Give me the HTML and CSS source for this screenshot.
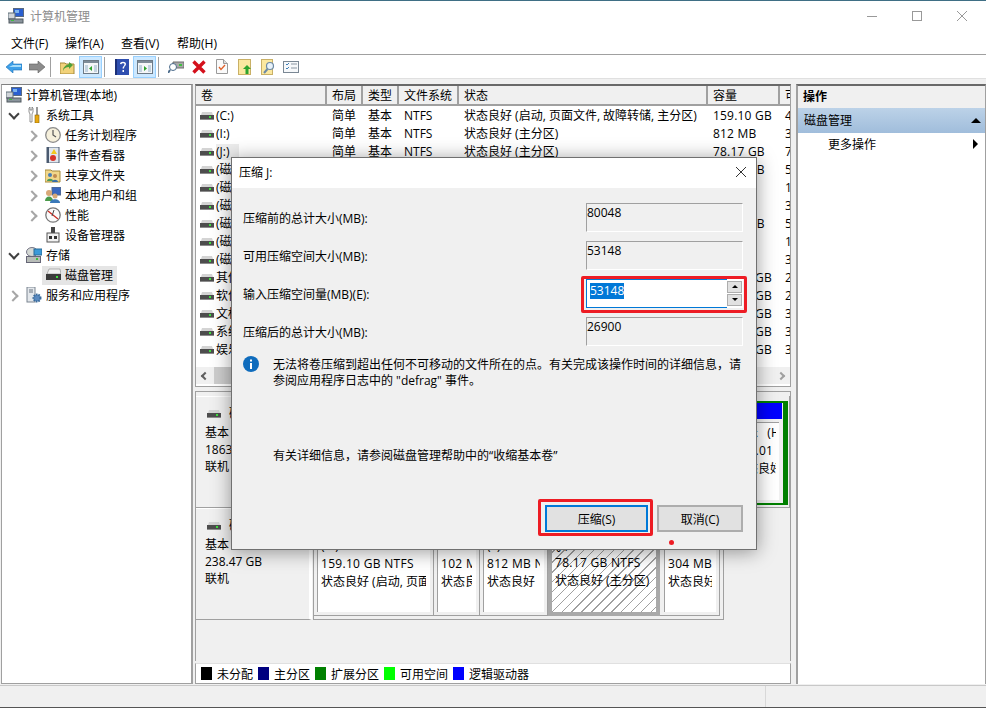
FILE: index.html
```html
<!DOCTYPE html>
<html lang="zh-CN">
<head>
    <meta charset="UTF-8">
    <title>计算机管理</title>
    <link rel="stylesheet" href="styles.css">
</head>
<body>
    <!-- icons used more than once -->
    <svg class="defs">
        <symbol id="drive" viewBox="0 0 14 8">
            <path d="M1 3 2 0h10l1 3z" fill="#d4d4d4"/>
            <rect x="0" y="3" width="14" height="5" fill="#4d4d4d"/>
            <rect x="0" y="7" width="14" height="1" fill="#8c8c8c"/>
            <rect x="9" y="4" width="2" height="2" fill="#3fe03f"/>
        </symbol>
        <symbol id="computer" viewBox="0 0 16 16">
            <rect x="5" y="0" width="11" height="9" fill="#5a6a80"/>
            <rect x="6" y="1" width="9" height="7" fill="#2a5fd0"/>
            <rect x="7" y="2" width="4" height="3" fill="#7db4ee"/>
            <rect x="0" y="5" width="7" height="6" fill="#d0d4d8" stroke="#60707a"/>
            <rect x="1" y="11" width="14" height="4" fill="#8a949c" stroke="#505a60"/>
            <rect x="3" y="12" width="3" height="1" fill="#3fbf3f"/>
        </symbol>
        <symbol id="panel" viewBox="0 0 16 14">
            <rect x=".5" y=".5" width="15" height="13" fill="#f4f6f8" stroke="#6d7a86"/>
            <rect x="1" y="1" width="14" height="2" fill="#7e8c98"/>
            <rect x="2" y="5" width="3" height="7" fill="#c3d3e0"/>
            <rect x="11" y="5" width="3" height="7" fill="#c3d3e0"/>
        </symbol>
    </svg>

    <div class="window">
        <div class="titlebar">
            <svg class="title-icon"><use href="#computer"/></svg>
            <span class="title-text">计算机管理</span>
            <div class="win-btns">
                <svg width="10" height="10" viewBox="0 0 10 10"><path d="M0 5.5h10" stroke="#999"/></svg>
                <svg width="10" height="10" viewBox="0 0 10 10"><rect x=".5" y=".5" width="9" height="9" fill="none" stroke="#999"/></svg>
                <svg width="10" height="10" viewBox="0 0 10 10"><path d="M0 0l10 10M10 0 0 10" stroke="#999"/></svg>
            </div>
        </div>

        <div class="menubar">
            <span>文件(F)</span>
            <span>操作(A)</span>
            <span>查看(V)</span>
            <span>帮助(H)</span>
        </div>

        <div class="toolbar">
            <div class="tool"><svg width="16" height="12" viewBox="0 0 16 12"><path d="M7 0v3h9v6H7v3L0 6z" fill="#3d9fe8" stroke="#1b6fb5" stroke-width=".6"/><path d="M7 4h8v2H3z" fill="#a5dcfa"/></svg></div>
            <div class="tool"><svg width="16" height="12" viewBox="0 0 16 12"><path d="M9 0v3H0v6h9v3l7-6z" fill="#8c8c8c" stroke="#606060" stroke-width=".6"/></svg></div>
            <div class="tool-sep"></div>
            <div class="tool"><svg width="15" height="15" viewBox="0 0 15 15"><path d="M0 4h5l1 1h8v10H0z" fill="#f2d27a" stroke="#a68a3a"/><path d="M3 12c0-4 3-6 6-7V3l4 3-4 4V8c-3 0-5 1-6 4z" fill="#4ea03a"/></svg></div>
            <div class="tool on"><svg width="16" height="14"><use href="#panel"/><path d="M9 6v5L6 8.500z" fill="#2da32d"/></svg></div>
            <div class="tool-sep"></div>
            <div class="tool"><svg width="14" height="16" viewBox="0 0 14 16"><rect width="14" height="16" fill="#2f4fb0"/><rect width="2" height="16" fill="#1b2f78"/><path d="M5 5c0-3 6-3 6 0 0 2-2 2-2 4.500H7.500C7.500 7 9.500 7 9.500 5.200c0-1.400-3-1.400-3 0z" fill="#fff"/><rect x="7.500" y="11" width="1.500" height="2" fill="#fff"/></svg></div>
            <div class="tool on"><svg width="16" height="14"><use href="#panel"/><path d="M7 6v5l3-2.500z" fill="#2da32d"/></svg></div>
            <div class="tool-sep"></div>
            <div class="tool"><svg width="16" height="13" viewBox="0 0 16 13"><path d="M5 2h11v6H5z" fill="#a8a8a8" stroke="#6d6d6d"/><rect x="11" y="4" width="3" height="2" fill="#3fbf3f"/><circle cx="5" cy="7" r="3.500" fill="#fff" stroke="#4a6a8a"/><path d="M2 10l-2 3" stroke="#4a6a8a" stroke-width="2"/></svg></div>
            <div class="tool"><svg width="14" height="14" viewBox="0 0 14 14"><path d="M1.500 1.500l11 11M12.500 1.500l-11 11" stroke="#d4101c" stroke-width="3.400"/></svg></div>
            <div class="tool"><svg width="12" height="15" viewBox="0 0 12 15"><path d="M.5.500h7l4 4v10H.5z" fill="#fafafa" stroke="#9a9a9a"/><path d="M7.500.500v4h4" fill="#ddd" stroke="#9a9a9a"/><path d="M3 8l2 2.500L9 6" fill="none" stroke="#e0602a" stroke-width="1.300"/></svg></div>
            <div class="tool"><svg width="13" height="16" viewBox="0 0 13 16"><rect x=".5" y=".5" width="12" height="15" fill="#fbe8a0" stroke="#c9b066"/><path d="M9 6l4 4h-2.500v5h-3v-5H5z" fill="#2ea32e"/></svg></div>
            <div class="tool"><svg width="14" height="16" viewBox="0 0 14 16"><rect x=".5" y=".5" width="11" height="15" fill="#fbe8a0" stroke="#c9b066"/><circle cx="9" cy="7" r="3.500" fill="#e8f2fa" stroke="#6d8aa5" stroke-width="1.200"/><path d="M6.500 10 3 14" stroke="#6d8aa5" stroke-width="2"/></svg></div>
            <div class="tool"><svg width="16" height="12" viewBox="0 0 16 12"><rect x=".5" y=".5" width="15" height="11" fill="#f6f8fa" stroke="#7a8794"/><path d="M3 3l1 1 2-2M3 7l1 1 2-2" fill="none" stroke="#3f7fb8"/><path d="M8 3h6M8 7h6" stroke="#8a96a2"/></svg></div>
        </div>

        <div class="workspace">
            <div class="tree">
                <div class="tree-row">
                    <svg class="ic"><use href="#computer"/></svg>计算机管理(本地)
                </div>
                <div class="tree-row lv1">
                    <span class="exp open"></span>
                    <svg class="ic" viewBox="0 0 16 16"><path d="M3 1v4l1 2v8h2V7l1-2V1L6 0v3H4V0z" fill="#fff" stroke="#777" stroke-width=".8"/><rect x="10" y="0" width="2" height="8" fill="#9a9a9a"/><rect x="9" y="8" width="4" height="8" fill="#e8a810" stroke="#8a6408" stroke-width=".6"/></svg>系统工具
                </div>
                <div class="tree-row lv2">
                    <span class="exp"></span>
                    <svg class="ic" viewBox="0 0 16 16"><circle cx="8" cy="8" r="7.300" fill="#f6f0dc" stroke="#8a8a8a" stroke-width="1.300"/><path d="M8 3v5l3 2" fill="none" stroke="#555" stroke-width="1.200"/></svg>任务计划程序
                </div>
                <div class="tree-row lv2">
                    <span class="exp"></span>
                    <svg class="ic" viewBox="0 0 16 16"><rect x="2" y="0" width="12" height="16" fill="#dfe6ee" stroke="#4a5a70"/><rect x="2" y="0" width="2" height="16" fill="#4a5a70"/><path d="M9 2l3 5H6z" fill="#f2c81e"/><circle cx="8" cy="11" r="3" fill="#d8352a"/></svg>事件查看器
                </div>
                <div class="tree-row lv2">
                    <span class="exp"></span>
                    <svg class="ic" viewBox="0 0 16 16"><path d="M0 3h6l1 1h8v11H0z" fill="#f2d78a" stroke="#a68a3a"/><circle cx="5" cy="8" r="2" fill="#4a7fb8"/><path d="M2 14c0-3 6-3 6 0z" fill="#4a9a5a"/><circle cx="10" cy="9" r="2" fill="#c08a50"/><path d="M7 15c0-3 6-3 6 0z" fill="#3a6fa8"/></svg>共享文件夹
                </div>
                <div class="tree-row lv2">
                    <span class="exp"></span>
                    <svg class="ic" viewBox="0 0 16 16"><rect x="7" y="0" width="9" height="8" fill="#3a68c0" stroke="#5a6a80"/><circle cx="4" cy="6" r="3" fill="#d8a878"/><path d="M0 14c0-6 8-6 8 0z" fill="#4a9a4a"/><circle cx="10" cy="9" r="2.500" fill="#d8a878"/><path d="M5 16c0-5 10-5 10 0z" fill="#3a78b8"/></svg>本地用户和组
                </div>
                <div class="tree-row lv2">
                    <span class="exp"></span>
                    <svg class="ic" viewBox="0 0 16 16"><circle cx="8" cy="8" r="7.200" fill="#fafafa" stroke="#777" stroke-width="1.300"/><path d="M3 4l10 8" stroke="#c8281e" stroke-width="1.300"/><path d="M9 3 7 9" stroke="#444"/></svg>性能
                </div>
                <div class="tree-row lv2">
                    <span class="exp none"></span>
                    <svg class="ic" viewBox="0 0 16 16"><rect x="6" y="0" width="4" height="6" fill="#444"/><rect x="2" y="6" width="12" height="9" fill="#f2f2f2" stroke="#555"/><rect x="4" y="9" width="3" height="3" fill="#333"/><rect x="9" y="9" width="3" height="3" fill="#333"/></svg>设备管理器
                </div>
                <div class="tree-row lv1">
                    <span class="exp open"></span>
                    <svg class="ic" viewBox="0 0 16 16"><ellipse cx="6" cy="5" rx="5.500" ry="4.500" fill="#d4d8d4" stroke="#778"/><rect x="8" y="2" width="8" height="6" fill="#3a9ad8" stroke="#2a6a98"/><rect x=".5" y="9.500" width="14" height="6" fill="#b8bcb8" stroke="#667"/><rect x="10" y="11" width="2" height="2" fill="#3fbf3f"/></svg>存储
                </div>
                <div class="tree-row lv2">
                    <span class="exp none"></span>
                    <span class="sel"><svg class="ic" viewBox="0 0 16 16"><path d="M2 7 4 2h11l1 5z" fill="#f2f2f2" stroke="#888" stroke-width=".6"/><rect x="1" y="7" width="15" height="6" fill="#3a3a3a"/><rect x="11" y="9" width="2" height="2" fill="#3fe03f"/></svg>磁盘管理</span>
                </div>
                <div class="tree-row lv1">
                    <span class="exp"></span>
                    <svg class="ic" viewBox="0 0 16 16"><rect x="1" y="0" width="8" height="15" fill="#e4e8ec" stroke="#7a8490"/><path d="M3 3h4M3 5h4" stroke="#6a7480"/><circle cx="11" cy="11" r="3.500" fill="#5a8ac0" stroke="#3a6a9a" stroke-width="2" stroke-dasharray="1.500 1"/></svg>服务和应用程序
                </div>
            </div>

            <div class="center">
                <div class="volumes">
                    <table class="vol-table">
                        <colgroup>
                            <col class="c-name"><col class="c-layout"><col class="c-type"><col class="c-fs"><col class="c-status"><col class="c-size"><col>
                        </colgroup>
                        <thead>
                            <tr><th>卷</th><th>布局</th><th>类型</th><th>文件系统</th><th>状态</th><th>容量</th><th>可</th></tr>
                        </thead>
                        <tbody>
                            <tr><td><svg class="drv"><use href="#drive"/></svg>(C:)</td><td>简单</td><td>基本</td><td>NTFS</td><td>状态良好 (启动, 页面文件, 故障转储, 主分区)</td><td>159.10 GB</td><td>4</td></tr>
                            <tr><td><svg class="drv"><use href="#drive"/></svg>(I:)</td><td>简单</td><td>基本</td><td>NTFS</td><td>状态良好 (主分区)</td><td>812 MB</td><td>3</td></tr>
                            <tr><td><svg class="drv"><use href="#drive"/></svg><span class="cur">(J:)</span></td><td>简单</td><td>基本</td><td>NTFS</td><td>状态良好 (主分区)</td><td>78.17 GB</td><td>7</td></tr>
                            <tr><td><svg class="drv"><use href="#drive"/></svg>(磁</td><td></td><td></td><td></td><td></td><td>78.17 GB</td><td>5</td></tr>
                            <tr><td><svg class="drv"><use href="#drive"/></svg>(磁</td><td></td><td></td><td></td><td></td><td>812 MB</td><td>1</td></tr>
                            <tr><td><svg class="drv"><use href="#drive"/></svg>(磁</td><td></td><td></td><td></td><td></td><td>812 MB</td><td>3</td></tr>
                            <tr><td><svg class="drv"><use href="#drive"/></svg>(磁</td><td></td><td></td><td></td><td></td><td>78.17 GB</td><td>5</td></tr>
                            <tr><td><svg class="drv"><use href="#drive"/></svg>(磁</td><td></td><td></td><td></td><td></td><td>812 MB</td><td>1</td></tr>
                            <tr><td><svg class="drv"><use href="#drive"/></svg>(磁</td><td></td><td></td><td></td><td></td><td>812 MB</td><td>3</td></tr>
                            <tr><td><svg class="drv"><use href="#drive"/></svg>其他</td><td></td><td></td><td></td><td></td><td>186.26 GB</td><td>2</td></tr>
                            <tr><td><svg class="drv"><use href="#drive"/></svg>软件</td><td></td><td></td><td></td><td></td><td>186.26 GB</td><td>2</td></tr>
                            <tr><td><svg class="drv"><use href="#drive"/></svg>文档</td><td></td><td></td><td></td><td></td><td>465.76 GB</td><td>3</td></tr>
                            <tr><td><svg class="drv"><use href="#drive"/></svg>系统</td><td></td><td></td><td></td><td></td><td>465.76 GB</td><td>3</td></tr>
                            <tr><td><svg class="drv"><use href="#drive"/></svg>娱乐</td><td></td><td></td><td></td><td></td><td>558.01 GB</td><td>3</td></tr>
                        </tbody>
                    </table>
                    <div class="hscroll">
                        <span class="arrow-l"></span>
                        <div class="thumb"></div>
                        <span class="arrow-r"></span>
                    </div>
                </div>

                <div class="disks">
                    <div class="disk">
                        <div class="disk-label">
                            <div class="disk-name"><svg class="drv"><use href="#drive"/></svg>磁盘 1</div>
                            <div>基本</div>
                            <div>1863.01 GB</div>
                            <div>联机</div>
                        </div>
                        <div class="parts">
                            <div class="logical">
                                <div class="part last-logical">
                                    <div class="bar blue"></div>
                                    <div class="part-body">
                                        <div class="pre">娱乐   (H:)</div>
                                        <div>558.01 GB NTFS</div>
                                        <div>状态良好 (逻辑驱动器)</div>
                                    </div>
                                </div>
                            </div>
                        </div>
                    </div>
                    <div class="disk">
                        <div class="disk-label">
                            <div class="disk-name"><svg class="drv"><use href="#drive"/></svg>磁盘 0</div>
                            <div>基本</div>
                            <div>238.47 GB</div>
                            <div>联机</div>
                        </div>
                        <div class="parts">
                            <div class="part w-c">
                                <div class="bar"></div>
                                <div class="part-body">
                                    <div>(C:)</div>
                                    <div>159.10 GB NTFS</div>
                                    <div>状态良好 (启动, 页面</div>
                                </div>
                            </div>
                            <div class="part w-r">
                                <div class="bar"></div>
                                <div class="part-body">
                                    <div></div>
                                    <div>102 MB</div>
                                    <div>状态良好</div>
                                </div>
                            </div>
                            <div class="part w-i">
                                <div class="bar"></div>
                                <div class="part-body">
                                    <div>(I:)</div>
                                    <div>812 MB N</div>
                                    <div>状态良好</div>
                                </div>
                            </div>
                            <div class="part w-j picked">
                                <div class="bar"></div>
                                <div class="part-body">
                                    <div>(J:)</div>
                                    <div>78.17 GB NTFS</div>
                                    <div>状态良好 (主分区)</div>
                                </div>
                            </div>
                            <div class="part w-e">
                                <div class="bar"></div>
                                <div class="part-body">
                                    <div></div>
                                    <div>304 MB</div>
                                    <div>状态良好</div>
                                </div>
                            </div>
                        </div>
                    </div>
                </div>

                <div class="legend">
                    <i class="k-black"></i><span>未分配</span>
                    <i class="k-navy"></i><span>主分区</span>
                    <i class="k-green"></i><span>扩展分区</span>
                    <i class="k-lime"></i><span>可用空间</span>
                    <i class="k-blue"></i><span>逻辑驱动器</span>
                </div>
            </div>

            <div class="actions">
                <div class="act-head">操作</div>
                <div class="act-group">磁盘管理<span class="tri-up"></span></div>
                <div class="act-item">更多操作<span class="tri-right"></span></div>
            </div>
        </div>

        <div class="statusbar"><div class="status-cell"></div></div>

        <!-- shrink dialog -->
        <div class="dialog">
            <div class="dlg-title">
                <span>压缩 J:</span>
                <svg width="10" height="10" viewBox="0 0 10 10"><path d="M0 0l10 10M10 0 0 10" stroke="#333"/></svg>
            </div>
            <div class="dlg-body">
                <div class="fields">
                    <label>压缩前的总计大小(MB):</label>
                    <div class="ro">80048</div>
                    <label>可用压缩空间大小(MB):</label>
                    <div class="ro">53148</div>
                    <label>输入压缩空间量(MB)(E):</label>
                    <div class="spin-field marked">
                        <div class="spin-input"><span class="picked-text">53148</span></div>
                        <div class="spin-btns">
                            <span class="spin-up"></span>
                            <span class="spin-down"></span>
                        </div>
                    </div>
                    <label>压缩后的总计大小(MB):</label>
                    <div class="ro">26900</div>
                </div>
                <div class="note">
                    <svg class="info" width="16" height="16" viewBox="0 0 16 16"><circle cx="8" cy="8" r="8" fill="#0f6cbd"/><rect x="7" y="7" width="2" height="6" fill="#fff"/><rect x="7" y="3.500" width="2" height="2" fill="#fff"/></svg>
                    <p>无法将卷压缩到超出任何不可移动的文件所在的点。有关完成该操作时间的详细信息，请参阅应用程序日志中的 "defrag" 事件。</p>
                </div>
                <p class="help">有关详细信息，请参阅磁盘管理帮助中的“收缩基本卷”</p>
                <div class="dlg-btns">
                    <button class="btn btn-main marked">压缩(S)</button>
                    <button class="btn btn-cancel">取消(C)</button>
                </div>
                <span class="red-dot"></span>
            </div>
        </div>
    </div>
</body>
</html>
```

FILE: styles.css
```css
* {
    box-sizing: border-box;
}

html, body {
    margin: 0;
    height: 100%;
    overflow: hidden;
}

body {
    font-family: "Open Sans", "Noto Sans CJK SC", sans-serif;
    font-size: 12px;
    color: #000;
    background-color: #f0f0f0;
}

.defs {
    display: none;
}

.window {
    position: relative;
    display: flex;
    flex-direction: column;
    width: 986px;
    height: 708px;
    border-top: 1px solid #3f6f85;
    border-bottom: 1px solid #555;
    overflow: hidden;
}

/* title + menu */

.titlebar {
    display: flex;
    align-items: center;
    height: 31px;
    padding: 0 0 2px 8px;
    background-color: #fff;
}

.title-icon {
    width: 16px;
    height: 16px;
}

.title-text {
    margin-left: 6px;
    color: #8c8c8c;
}

.win-btns {
    display: flex;
    gap: 35px;
    margin-left: auto;
    margin-right: 19px;
}

.menubar {
    display: flex;
    align-items: center;
    height: 23px;
    padding-left: 11px;
    gap: 16px;
    background-color: #fff;
    border-bottom: 1px solid #a0a0a0;
}

.menubar span {
    width: 40px;
}

.menubar span:first-child {
    width: 38px;
}

/* toolbar */

.toolbar {
    display: flex;
    align-items: center;
    height: 24px;
    padding-left: 2px;
    background-color: #fff;
    border-bottom: 1px solid #e0e0e0;
}

.tool {
    display: flex;
    align-items: center;
    justify-content: center;
    width: 23px;
    height: 22px;
}

.tool.on {
    background-color: #cce8ff;
    border: 1px solid #99d1ff;
}

.tool-sep {
    width: 1px;
    height: 20px;
    margin: 0 5px 0 2px;
    background-color: #a0a0a0;
}

/* panes */

.workspace {
    display: flex;
    flex: 1;
    min-height: 0;
    padding: 5px 0 1px 1px;
}

.tree {
    width: 192px;
    background-color: #fff;
    border: 1px solid #a0a0a0;
    border-top-color: #808080;
    border-right-width: 2px;
    white-space: nowrap;
}

.tree-row {
    display: flex;
    align-items: center;
    height: 20px;
    padding-left: 4px;
}

.tree-row.lv1 {
    padding-left: 5px;
}

.tree-row.lv2 {
    padding-left: 24px;
}

.ic {
    flex: none;
    width: 16px;
    height: 16px;
    margin-right: 4px;
}

.exp {
    position: relative;
    flex: none;
    width: 12px;
    height: 12px;
    margin-right: 7px;
}

.exp::before {
    content: "";
    position: absolute;
    left: 2px;
    top: 3px;
    width: 6px;
    height: 6px;
    border-top: 2px solid #a6a6a6;
    border-right: 2px solid #a6a6a6;
    transform: rotate(45deg);
}

.exp.open::before {
    left: 3px;
    top: 1px;
    border-color: #404040;
    transform: rotate(135deg);
}

.exp.none::before {
    display: none;
}

.sel {
    display: flex;
    align-items: center;
    height: 19px;
    margin-left: -3px;
    padding: 0 4px 0 3px;
    background-color: #e5e5e5;
}

.center {
    display: flex;
    flex-direction: column;
    width: 596px;
    margin-left: 2px;
}

.volumes {
    flex: none;
    height: 303px;
    background-color: #fff;
    border: 1px solid #a0a0a0;
    border-top: 2px solid #696969;
    overflow: hidden;
}

.vol-table {
    width: 640px;
    border-collapse: separate;
    border-spacing: 0;
    table-layout: fixed;
    white-space: nowrap;
}

.c-name { width: 131px; }
.c-layout { width: 36px; }
.c-type { width: 36px; }
.c-fs { width: 60px; }
.c-status { width: 249px; }
.c-size { width: 72px; }

.vol-table th {
    height: 20px;
    padding: 2px 0 0 5px;
    line-height: 16px;
    font-weight: normal;
    text-align: left;
    background-color: #f0f0f0;
    border-right: 2px solid #a0a0a0;
    border-bottom: 2px solid #a0a0a0;
    overflow: hidden;
}

.vol-table td {
    height: 18px;
    padding: 1px 0 0 5px;
    line-height: 16px;
    overflow: hidden;
}

.vol-table td:first-child {
    padding-left: 4px;
}

.vol-table td:nth-child(6) {
    letter-spacing: .2px;
}

.drv {
    width: 14px;
    height: 8px;
    margin-right: 2px;
}

.cur {
    display: inline-block;
    padding-right: 10px;
    background-color: #ececec;
}

.hscroll {
    display: flex;
    align-items: center;
    height: 17px;
    margin-top: 9px;
    background-color: #f0f0f0;
}

.arrow-l, .arrow-r {
    flex: none;
    width: 6px;
    height: 6px;
    margin: 0 6px;
    border-top: 2px solid #606060;
    border-left: 2px solid #606060;
    transform: rotate(-45deg);
}

.arrow-r {
    margin-left: auto;
    border-color: #a0a0a0;
    transform: rotate(135deg);
}

.thumb {
    width: 480px;
    height: 17px;
    background-color: #cdcdcd;
}

/* graphical disk view */

.disks {
    flex: none;
    height: 270px;
    margin-top: 4px;
    padding-top: 4px;
    border-top: 1px solid #a0a0a0;
    border-left: 1px solid #a0a0a0;
    border-right: 1px solid #a0a0a0;
}

.disk {
    display: flex;
    height: 112px;
}

.disk-label {
    position: relative;
    flex: none;
    width: 116px;
    padding: 27px 0 0 9px;
    line-height: 17px;
    border-top: 1px solid #fff;
    border-bottom: 1px solid #a0a0a0;
    border-right: 3px solid #fff;
}

.disk-name {
    position: absolute;
    top: 8px;
    left: 11px;
}

.disk-name .drv {
    margin-right: 8px;
}

.parts {
    display: flex;
    flex: none;
    width: 411px;
    margin-left: 1px;
    padding: 0 3px 3px 0;
    border: 1px solid #a0a0a0;
    border-top: 0;
}

.disk:first-child .parts {
    flex: 1;
    justify-content: flex-end;
    padding: 5px 1px 2px 0;
    border-left: 0;
}

.logical {
    display: flex;
    justify-content: flex-end;
    width: 300px;
    padding: 0 1px 3px 0;
    border: 5px solid #008000;
    border-width: 2px 5px;
    background-color: #f0f0f0;
}

.part {
    display: flex;
    flex-direction: column;
    height: 100%;
    min-width: 0;
    padding: 6px 3px 3px 3px;
    border-right: 1px solid #a0a0a0;
    border-bottom: 1px solid #a0a0a0;
    background-color: #f0f0f0;
}

.bar {
    flex: none;
    height: 16px;
    margin: 0 -3px 2px -3px;
    background-color: #000080;
}

.bar.blue {
    margin: 0 0 3px 0;
    background-color: #0000ff;
}

.part-body {
    flex: 1;
    padding: 4px 4px 0 3px;
    line-height: 18px;
    background-color: #fff;
    border-left: 1px solid #a0a0a0;
    border-top: 1px solid #a0a0a0;
    white-space: nowrap;
    overflow: hidden;
}

.part-body div {
    height: 18px;
    overflow: hidden;
}

.part-body div:nth-child(2) {
    letter-spacing: .3px;
}

.pre {
    white-space: pre;
}

.last-logical {
    width: 52px;
    padding: 0;
    border: 0;
}

.last-logical .part-body {
    margin-right: 3px;
    padding: 1px 3px 0 3px;
}

.w-c { width: 120px; }
.w-r { width: 46px; }
.w-i { width: 68px; }
.w-j { width: 112px; }
.w-e { width: 60px; padding-left: 4px; }

.picked {
    padding: 6px 4px 4px 4px;
    background-color: #a9a9a9;
    border: 0;
}

.picked .bar {
    margin: 0 0 2px 0;
}

.picked .part-body {
    border: 0;
    background: repeating-linear-gradient(135deg, #a0a0a0 0, #a0a0a0 1px, #fff 1px, #fff 7px);
}

.legend {
    display: flex;
    flex: none;
    align-items: center;
    gap: 5px;
    height: 21px;
    margin-top: 2px;
    padding-left: 5px;
    background-color: #fff;
    border: 1px solid #a0a0a0;
    border-top: 1px solid #e0e0e0;
    white-space: nowrap;
}

.legend i {
    width: 11px;
    height: 13px;
}

.k-black { background-color: #000; }
.k-navy { background-color: #000080; }
.k-green { background-color: #008000; }
.k-lime { background-color: #00ff00; }
.k-blue { background-color: #0000ff; }

/* actions pane */

.actions {
    flex: 1;
    margin-left: 5px;
    background-color: #fff;
    border-left: 2px solid #a0a0a0;
    border-top: 2px solid #696969;
    border-right: 1px solid #a0a0a0;
}

.act-head {
    display: flex;
    align-items: center;
    height: 22px;
    padding: 0 0 2px 5px;
    font-weight: 600;
    background-color: #f0f0f0;
}

.act-group {
    position: relative;
    display: flex;
    align-items: center;
    height: 25px;
    padding: 0 0 2px 6px;
    background: linear-gradient(#bcd2e8, #a0bddb);
}

.act-item {
    position: relative;
    display: flex;
    align-items: center;
    height: 23px;
    padding: 0 0 2px 30px;
}

.tri-up {
    position: absolute;
    right: 4px;
    top: 10px;
    border-left: 5px solid transparent;
    border-right: 5px solid transparent;
    border-bottom: 5px solid #000;
}

.tri-right {
    position: absolute;
    right: 7px;
    top: 6px;
    border-top: 5px solid transparent;
    border-bottom: 5px solid transparent;
    border-left: 5px solid #000;
}

.statusbar {
    display: flex;
    flex: none;
    justify-content: flex-end;
    height: 22px;
    border-top: 1px solid #c8c8c8;
}

.status-cell {
    width: 221px;
    border-left: 1px solid #d8d8d8;
}

/* dialog floats over the console */

.dialog {
    position: absolute;
    left: 231px;
    top: 156px;
    width: 526px;
    height: 393px;
    background-color: #f0f0f0;
    border: 1px solid #707070;
    box-shadow: 0 2px 18px rgba(0, 0, 0, .4);
}

.dlg-title {
    display: flex;
    align-items: center;
    justify-content: space-between;
    height: 30px;
    padding: 0 10px 2px 7px;
    background-color: #fff;
}

.dlg-body {
    position: relative;
    padding: 15px 13px 0 11px;
}

.fields {
    display: grid;
    grid-template-columns: 343px 157px;
    grid-auto-rows: 29px;
    row-gap: 9px;
    align-items: center;
}

.ro {
    height: 29px;
    padding-top: 1px;
    line-height: 16px;
    border: 1px solid #fff;
    border-top-color: #a0a0a0;
    border-left-color: #a0a0a0;
}

.spin-field {
    display: flex;
    height: 29px;
}

.spin-input {
    width: 141px;
    padding: 2px 0 0 3px;
    background-color: #fff;
    border: 1px solid #0078d7;
    border-right: 0;
}

.picked-text {
    display: inline-block;
    height: 16px;
    line-height: 16px;
    color: #fff;
    background-color: #0078d7;
}

.spin-btns {
    display: flex;
    flex-direction: column;
    justify-content: center;
    gap: 1px;
    width: 16px;
    background-color: #fff;
    padding-right: 1px;
}

.spin-up, .spin-down {
    position: relative;
    height: 12px;
    background-color: #e1e1e1;
    border: 1px solid #adadad;
}

.spin-up::after, .spin-down::after {
    content: "";
    position: absolute;
    left: 4px;
    top: 3px;
    border-left: 3px solid transparent;
    border-right: 3px solid transparent;
}

.spin-up::after {
    border-bottom: 3px solid #000;
}

.spin-down::after {
    border-top: 3px solid #000;
}

.marked {
    position: relative;
}

.marked::after {
    content: "";
    position: absolute;
    left: -5px;
    right: -4px;
    top: -3px;
    bottom: -5px;
    border: 3px solid #ed1c24;
    border-radius: 2px;
    pointer-events: none;
}

.note {
    display: flex;
    margin-top: 11px;
}

.info {
    flex: none;
    margin: -1px 14px 0 0;
}

.note p {
    width: 472px;
    margin: 0;
    line-height: 16px;
}

.help {
    margin: 59px 0 0 30px;
    line-height: 16px;
}

.dlg-btns {
    display: flex;
    justify-content: flex-end;
    gap: 9px;
    margin-top: 41px;
}

.btn {
    height: 27px;
    padding: 0;
    font: inherit;
    color: #000;
    background-color: #e1e1e1;
    border: 2px solid #adadad;
}

.btn-main {
    width: 103px;
    border-color: #0078d7;
}

.btn-main::after {
    left: -9px;
    right: -7px;
    top: -8px;
    bottom: -6px;
}

.btn-cancel {
    width: 86px;
}

.red-dot {
    position: absolute;
    left: 437px;
    top: 352px;
    width: 5px;
    height: 5px;
    border-radius: 50%;
    background-color: #ed1c24;
}
```
